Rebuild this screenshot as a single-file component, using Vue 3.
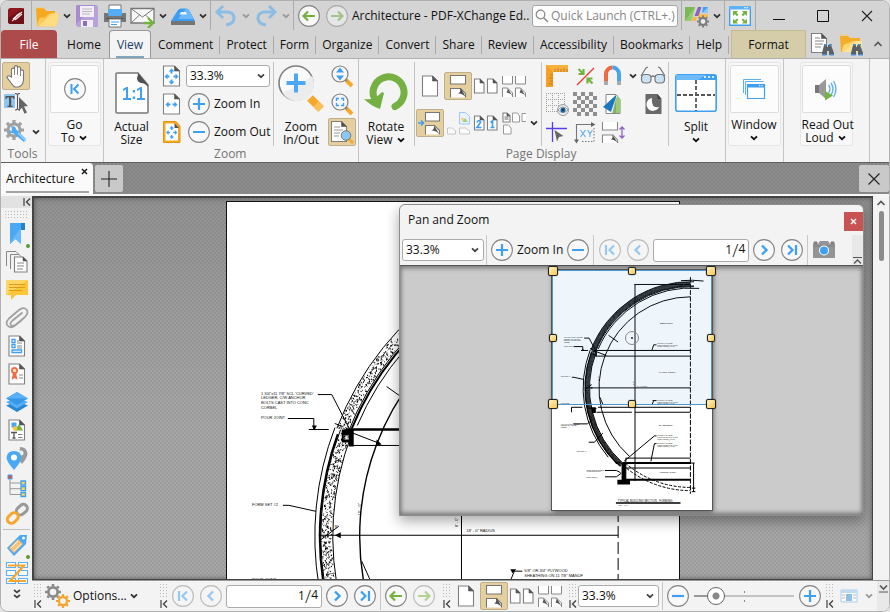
<script setup>
import { h, ref } from 'vue'

const B = '#3fa0f2'
const fold = (x, y, w, hh, f = 5) =>
  `<path d="M${x} ${y}h${w - f}l${f} ${f}v${hh - f}h${-w}z" fill="#fff" stroke="#808080" stroke-width="1.1"/><path d="M${x + w - f} ${y}v${f}h${f}z" fill="#555" stroke="#555" stroke-width=".6"/>`
const ring = (inner, fade) =>
  `<g opacity="${fade ? 0.5 : 1}"><circle cx="12" cy="12" r="10.4" fill="#f8f8f8" stroke="#858585" stroke-width="1.1"/>${inner}</g>`
const stroke = (d, c = B, w = 2.2) => `<path d="${d}" fill="none" stroke="${c}" stroke-width="${w}"/>`
const gear = (cx, cy, r, c) => {
  let s = `<circle cx="${cx}" cy="${cy}" r="${r * 0.58}" fill="none" stroke="${c}" stroke-width="${r * 0.34}"/>`
  for (let i = 0; i < 8; i++) {
    const a = (i * Math.PI) / 4
    s += `<path d="M${(cx + Math.cos(a) * r * 0.7).toFixed(1)} ${(cy + Math.sin(a) * r * 0.7).toFixed(1)}L${(cx + Math.cos(a) * r).toFixed(1)} ${(cy + Math.sin(a) * r).toFixed(1)}" stroke="${c}" stroke-width="${r * 0.32}"/>`
  }
  return s
}
const binoc = '<g transform="translate(12 11)"><path d="M2 2h3v2h1V2h3l3 8v2H7V8H5v4H0v-2z" fill="#5b6168"/><path d="M2 1h3v1.500H2zM7 1h3v1.500H7zM0 11h4.500v1.500H0zM7.500 11h4.500v1.500H7.500z" fill="#4a90d0"/></g>'
const checker = () => {
  let s = ''
  for (let y = 0; y < 6; y++) for (let x = 0; x < 6; x++) s += `<path d="M${x * 4} ${y * 4}h4v4h-4z" fill="${(x + y) % 2 ? '#f4f4f4' : '#8f8f8f'}"/>`
  return s
}
const fitArrows = `<g fill="${B}"><path d="M11.500 4.500l3 3h-2v2h-2v-2h-2zM11.500 20.500l3-3h-2v-2h-2v2h-2zM4.500 12.500l3-3v2h2v2h-2v2zM18.500 12.500l-3-3v2h-2v2h2v2z"/></g>`
const lens = (inner) =>
  `<path d="M16 16l6 6" stroke="#f6a72c" stroke-width="4"/><path d="M15 15l2 2" stroke="#888" stroke-width="2"/><circle cx="10" cy="10" r="8" fill="#f6f6f6" stroke="#808080" stroke-width="1.2"/>${inner}`

const icons = {
  logo: [16, 16, '<rect width="16" height="16" rx="2.500" fill="#8e1720"/><path d="M0 10L16 0v16H3q-3 0-3-3z" fill="#6d1017"/><path d="M4 13q3-2 4-4l6-5M5 11l7-6M7 12l7-6M8 8l4-3" stroke="#f4e8e8" stroke-width="1.100" fill="none"/>'],
  folder: [24, 24, '<path d="M1 4h8l2 3h9v5L3 22H2z" fill="#f5a91f"/><path d="M1 4h8" stroke="#fcc951" stroke-dasharray="2 1"/><path d="M2 22.500q1-8 4-9h4l4-4h9.500q0 9-3 13z" fill="#fbca57"/><path d="M4 22L17 9.500h6.500q0 8-3 13z" fill="#ffdc80"/>'],
  save: [24, 24, '<path d="M2 1h19l2 2v20H3l-2-2V2z" fill="#a78ccf"/><path d="M1 20L21 1l2 2v20H3z" fill="#b7a2da"/><path d="M5 2h14v11H5z" fill="#f3eff9"/><path d="M7 5h10M7 7.500h10M7 10h8" stroke="#aaa" stroke-width=".8"/><path d="M6 16h12v7H6z" fill="#f0ecf5"/><path d="M8 17h4v5H8z" fill="#8a70b5"/>'],
  print: [24, 24, '<path d="M6 1h12v7H6z" fill="#fff" stroke="#777"/><path d="M1 9h22v9H1z" fill="#767676"/><path d="M5 5h14v5l-1 2H6l-1-2z" fill="#55aef5"/><path d="M3 14.500h18" stroke="#555"/><path d="M6 15h12v8H6z" fill="#fff" stroke="#777"/><path d="M8 18h8M8 20.500h6" stroke="#3fa0f2"/>'],
  mail: [26, 24, '<path d="M1 4.500h23v14.500H1z" fill="#f8f8f8" stroke="#777" stroke-width="1.300"/><path d="M1 4.500l11.500 8.500L24 4.500M1 19l8.500-8M24 19l-8.500-8" fill="none" stroke="#777"/><path d="M14 19h8M18 14l5 5-5 5" fill="none" stroke="#74b33c" stroke-width="2.400"/>'],
  scan: [26, 24, '<path d="M1 17L8 6q1-1.500 3-1.500h5q2 0 3 1.500l6 11z" fill="#3d9df0"/><path d="M8 15l8-10.500q2 0 3 1.500l5 9z" fill="#6db9f7"/><path d="M11 8h5l1 2.500H9.500z" fill="#e8f4ff"/><path d="M1 17h24v4H1z" fill="#757575"/>'],
  undo: [24, 24, '<path d="M3 8h11q6 1 6 6 0 6-8 7" fill="none" stroke="#8abce5" stroke-width="3"/><path d="M9 2L3 8l6 6" fill="none" stroke="#8abce5" stroke-width="2.800"/>'],
  redo: [24, 24, '<path d="M21 8H10q-6 1-6 6 0 6 8 7" fill="none" stroke="#8abce5" stroke-width="3"/><path d="M15 2l6 6-6 6" fill="none" stroke="#8abce5" stroke-width="2.800"/>'],
  back: [24, 24, ring(stroke('M18 12H7M11 7.500L6.500 12l4.500 4.500', '#74b33c', 2.2))],
  fwd: [24, 24, ring(stroke('M6 12h11M13 7.500l4.500 4.500-4.500 4.500', '#74b33c', 2.2), true)],
  plus: [24, 24, ring(stroke('M12 6v12M6 12h12'))],
  minus: [24, 24, ring(stroke('M6 12h12'))],
  next: [24, 24, ring(stroke('M10 7.500l4.500 4.500-4.500 4.500', B, 2.4))],
  last: [24, 24, ring(stroke('M8 7.500l4.500 4.500L8 16.500M16 7v10', B, 2.2))],
  prev: [24, 24, ring(stroke('M14 7.500L9.500 12l4.500 4.500', B, 2.4), true)],
  first: [24, 24, ring(stroke('M16 7.500L11.500 12l4.500 4.500M8 7v10', B, 2.2), true)],
  goto: [24, 24, ring(stroke('M15.500 7.500L11 12l4.500 4.500M8.500 7v10', B, 2))],
  chev: [10, 8, '<path d="M2 2.300L5 5.200 8 2.300" fill="none" stroke="currentColor" stroke-width="1.800"/>'],
  collapse: [8, 8, '<path d="M1 0v8" stroke="#444" stroke-width="1.200"/><path d="M7 .5L3.500 4 7 7.500" fill="none" stroke="#444" stroke-width="1.400"/>'],
  search: [14, 14, '<circle cx="5.500" cy="5.500" r="4.300" fill="none" stroke="#888" stroke-width="1.200"/><path d="M8.500 8.500L13 13" stroke="#888" stroke-width="1.400"/>'],
  launcher: [24, 24, '<path d="M0 3h10L6 17H0z" fill="#7cb856"/><path d="M0 17L10 3 6 17z" fill="#94cc72"/><path d="M13 3h3.500l-3 9H9.500z" fill="#8b62c2"/><path d="M8 13h4l-1 4H7z" fill="#f7b640"/><path d="M18 3h5v6h-6z" fill="#3fa0f2"/><path d="M17 9l6-6v6z" fill="#8cc6fa"/><path d="M14 10h9v4H13z" fill="#f9c04f"/>' + gear(18, 17.5, 6, '#7c7c7c') + '<circle cx="18" cy="17.500" r="2" fill="#eee"/>'],
  full: [22, 20, '<path d="M.7.700h20.600v18.600H.7z" fill="#fff" stroke="#3fa0f2" stroke-width="1.400"/><path d="M0 0h22v3.500H0z" fill="#5eb2f7"/><path d="M15 1.700h1.500M17.500 1.700H19" stroke="#fff"/><g fill="#74b33c"><path d="M4 5h5L7.500 6.700l2 2-1.500 1.500-2-2L4 10zM18 5h-5l1.500 1.700-2 2 1.500 1.500 2-2 2 1.800zM4 17.500h5l-1.500-1.700 2-2L8 12.500l-2 2-2-1.800zM18 17.500h-5l1.500-1.700-2-2 1.500-1.300 2 2 2-1.800z"/></g>'],
  min: [12, 12, '<path d="M0 9.500h12" stroke="#111" stroke-width="1"/>'],
  max: [12, 12, '<path d="M.5.500h11v11H.5z" fill="none" stroke="#111"/>'],
  x: [12, 12, '<path d="M1 1l10 10M11 1L1 11" stroke="#222" stroke-width="1.100"/>'],
  x15: [14, 14, '<path d="M1.500 1.500l11 11M12.500 1.500l-11 11" stroke="#222" stroke-width="1.100"/>'],
  xs: [7, 7, '<path d="M1 1l5 5M6 1L1 6" stroke="currentColor" stroke-width="1.400"/>'],
  findDoc: [24, 24, fold(1.5, 1.5, 15, 19, 5) + '<path d="M5 6h5M5 9h9M5 12h8M5 15h6" stroke="#888"/>' + binoc],
  findFolder: [24, 24, '<path d="M1 4h8l2 2h10v4L4 20H2z" fill="#f4ad27"/><path d="M1 3h8" stroke="#ffc94a" stroke-dasharray="2 1"/><path d="M3 20q0-6 3-8l4-1 4-2h9q0 8-3 11z" fill="#ffd66e"/><path d="M4 20L17 9h6q0 8-3 11z" fill="#ffe39b"/>' + binoc],
  hand: [20, 24, '<path d="M5.500 13V5q1.500-1.800 3 0V2.500q1.500-1.800 3 0V3.500q1.500-1.500 3 .3v2.700q1.500-1.300 3 .3V16q-.5 5.500-5 7H9q-2-1-3.500-3.500L1 13.500q.5-2.300 2.500-1.500z" fill="#fff" stroke="#777" stroke-width="1.100"/><path d="M8.500 5v6M11.500 4v7M14.500 6v6" stroke="#888"/>'],
  select: [24, 22, '<path d="M0 1h11v14H0z" fill="#8fc7f2"/><path d="M1.500 3h9v3H9.500L9 4.500H7.200v8.300h1.500v1.200H3.500v-1.200H5V4.500H3L2.500 6h-1z" fill="#555"/><path d="M11 .5q2 0 2.500 1.200Q14 .5 16 .5M13.500 2v14M11 17q2 0 2.500-1.200Q14 17 16 17" fill="none" stroke="#555" stroke-width="1.100"/><path d="M15 4l9 9-4 .5 3 6-2.500 1.300-2.600-6L15 18z" fill="#666"/>'],
  wrench: [24, 24, gear(10, 10, 10, '#a0a0a0') + '<circle cx="10" cy="10" r="4.500" fill="#f4f4f4"/><path d="M8 9L7 6.500q4.500-1 5 2.800l10 9.700-2 3L9 13q-4 1-4-3.500l2.500 2z" fill="#4fa9f2"/><path d="M14 13l8 8" stroke="#a8d5fa" stroke-width="1.200"/>'],
  actual: [34, 42, '<path d="M2 1h21l10 12v27q0 1-1 1H2q-1 0-1-1V2q0-1 1-1z" fill="#fdfdfd" stroke="#777" stroke-width="1.500"/><path d="M23 1q0 3-1 5 0 4 4 5 4 0 7 4v-2z" fill="#505050"/><g fill="#3fa0f2"><path d="M8 17l3.500-2H13v12h-2V17.500L8 19zM8 26h8v2H8zM22 17l3.500-2H27v12h-2V17.500L22 19zM22 26h8v2h-8zM17.800 18h2.200v2.500h-2.200zM17.800 24.500h2.200V27h-2.200z"/></g>'],
  fitPage: [24, 24, fold(3.5, 2, 16, 20) + fitArrows],
  fitWidth: [24, 24, fold(3.5, 2, 16, 20) + `<path d="M5.500 12.500l3-3v2h2v2h-2v2zM17.500 12.500l-3-3v2h-2v2h2v2z" fill="${B}"/>`],
  fitVisible: [24, 24, '<path d="M3.500 1.500h12.500l4 4.500v16.500h-16.500z" fill="#f7a927" stroke="#e5940c"/><path d="M5.500 3.500h9l3.500 4v13h-12.500z" fill="#fff"/><path d="M14.500 3v5h4.500z" fill="#555"/>' + `<g transform="translate(2.500 2.500) scale(.8)">${fitArrows}</g>`],
  zoomBig: [46, 48, '<path d="M32 34l11 11" stroke="#f6a72c" stroke-width="8"/><path d="M38 40l5 5" stroke="#fbbf57" stroke-width="7.500"/><circle cx="18" cy="19" r="17" fill="#fafafa" stroke="#808080" stroke-width="1.600"/><path d="M4 28Q20 24 34 12A17 17 0 0 1 6 31z" fill="#ececec"/><path d="M18 9.500v19M8.500 19h19" stroke="#4ba8f4" stroke-width="4"/>'],
  zoomDyn: [24, 24, lens(`<path d="M10 3.500l4 5H6zM10 16.500l4-5H6z" fill="${B}"/>`)],
  zoomMarq: [24, 24, lens(stroke('M6.500 9V6.500H9M11 6.500h2.500V9M13.500 11v2.500H11M9 13.500H6.500V11', B, 1.4))],
  panZoom: [24, 24, fold(1.5, 1.5, 15, 20) + '<path d="M4 7h6M4 10h9M4 13h6M4 16h5" stroke="#999"/><path d="M19 19l4 4" stroke="#f6a72c" stroke-width="3"/><circle cx="16" cy="15.500" r="4.800" fill="#8cc6f4" stroke="#777"/>'],
  rotate: [46, 40, '<path d="M10.500 23A15.500 15.500 0 1 1 32 33.500" fill="none" stroke="#76b043" stroke-width="7" stroke-linecap="round"/><path d="M1 26q10 2 18-7l2 1-4 16Q8 33 1 26z" fill="#76b043"/>'],
  single: [24, 24, fold(4.5, 2, 15, 20)],
  cont: [24, 24, '<path d="M4.500 1.500h15v8.500h-15z" fill="#fff" stroke="#777" stroke-width="1.100"/><path d="M4.500 23.500V14.500h10l5 5v4" fill="#fff" stroke="#777" stroke-width="1.100"/><path d="M14 14.500h1l5 9q-3-4-8-4 3-1 2-5z" fill="#505050"/>'],
  two: [26, 24, fold(1.5, 5, 9.5, 14, 4) + fold(14.5, 5, 9.5, 14, 4)],
  quad: [26, 24, '<path d="M1.500 2v8h10V2M14.500 2v8h10V2" fill="#fff" stroke="#888"/><path d="M1.500 23v-9h5l5 5v4M14.500 23v-9h5l5 5v4" fill="#fff" stroke="#888"/><path d="M6.500 14l5 8q-2-3-6-3.500 1.500-2 1-4.500zM19.500 14l5 8q-2-3-6-3.500 1.500-2 1-4.500z" fill="#555"/>'],
  gaps: [26, 24, '<path d="M8.500 1.500h14v8.500h-14zM8.500 23.500V14.500h9l5 5v4" fill="#fff" stroke="#777" stroke-width="1.100"/><path d="M17 14.500l5.500 9q-3-4-8-4 3-1 2.500-5z" fill="#505050"/><path d="M1 12h5M4 9.500L6.500 12 4 14.500" fill="none" stroke="#3fa0f2" stroke-width="1.600"/>'],
  bg: [26, 24, '<g opacity=".6"><path d="M14.500 1.500h6l4 4v7.500h-10z" fill="#e3f2fd" stroke="#5fb0f0"/><path d="M17 11l3-4 3 4z" fill="#74b33c"/><circle cx="17.500" cy="8" r="1.500" fill="#f7b640"/><path d="M2.500 23v-6h5l3 3v3zM14.500 23v-6h6l4 3v3z" fill="#fff" stroke="#aaa"/></g>'],
  rtl: [26, 24, fold(1.5, 5, 9.5, 14, 4) + fold(14.5, 5, 9.5, 14, 4) + '<path d="M4 11.500q.5-2 2.500-1.700 2 .7 0 3L4 16.500h4.500M17.500 11.500l2-1.500v6.500M17.500 16.500h4" fill="none" stroke="#3fa0f2" stroke-width="1.700"/>'],
  many: [26, 24, fold(2, 2, 7, 9, 3) + '<path d="M3.500 6h4M3.500 8h4" stroke="#666"/><path d="M11.500 2h5l2 3v6h-7zM25 2.500h-4v8h4M2.500 14h5l2.500 3v6H2.500z" fill="#fff" stroke="#999"/>'],
  ruler: [24, 24, '<path d="M1 1h22v7H8v15H1z" fill="#f8b03c"/><path d="M1 1l7 7v15H1z" fill="#f59f25"/><path d="M10 8V5M13 8V4M16 8V5M19 8V4M22 8V5M8 11H5M8 14H4M8 17H5M8 20H4" stroke="#c07a1c"/>'],
  snap: [24, 24, '<path d="M4 21L21 4" stroke="#e33" stroke-width="1.200"/><path d="M5.500 5l4 4M10.500 5v5h-5M19.500 19.500l-4-4M14.500 19.500v-5h5" fill="none" stroke="#74b33c" stroke-width="2.200"/>'],
  magnet: [24, 24, '<path d="M5 20V10a6.500 6.500 0 0 1 6.500-6.500" fill="none" stroke="#ee6a45" stroke-width="4"/><path d="M11.500 3.500A6.500 6.500 0 0 1 18 10v10" fill="none" stroke="#4ba2ee" stroke-width="4"/><path d="M3 17h4v4H3zM16 17h4v4h-4z" fill="#aaa"/>'],
  glasses: [26, 24, '<path d="M1 12L6 4l2-1M25 12L20 4l-2-1M11 13q2-2 4 0" fill="none" stroke="#777" stroke-width="1.200"/><rect x="1.500" y="10.500" width="9.500" height="8.500" rx="3.500" fill="#c9e3f6" stroke="#777" stroke-width="1.200"/><rect x="15" y="10.500" width="9.500" height="8.500" rx="3.500" fill="#c9e3f6" stroke="#777" stroke-width="1.200"/>'],
  grid: [24, 24, '<path d="M1.500 1v19M7.500 1v19M13.500 1v19M19.500 1v12M1 1.500h20M1 7.500h20M1 13.500h20M1 19.500h12" stroke="#a0a0a0" stroke-dasharray="1 1"/><circle cx="18" cy="18" r="5.500" fill="#eee" stroke="#999"/><path d="M13 18q5-6 10 0-5 5-10 0z" fill="#fff" stroke="#888" stroke-width=".8"/><circle cx="18" cy="18" r="2.600" fill="#1b69a8"/><circle cx="18" cy="18" r="1" fill="#0a2c4a"/>'],
  checker: [24, 24, checker()],
  overlay: [24, 24, '<path d="M5 2.500h10l4 5v14H5z" fill="#fff" stroke="#888"/><path d="M16 3l3.500 5v13h-8z" fill="#9cc97a"/><path d="M2 15L15 3v2L10 20z" fill="#1b76c0"/><path d="M15 3v18h-4z" fill="#2c6a3c" opacity=".25"/>'],
  moon: [24, 24, '<path d="M4.500 2h12l4 5v15h-16z" fill="#696969"/><path d="M16.500 2l4 5h-4z" fill="#444"/><path d="M11 6a6.500 6.500 0 1 0 7 9q-8 2-7-9z" fill="#fff"/>'],
  cross: [24, 24, '<path d="M1 8.500h21M7.500 2v20" stroke="#5a3bea" stroke-width="1.300"/><path d="M9.500 10l9 6-4.500 1-2 4.500z" fill="#666"/>'],
  xy: [26, 24, '<path d="M4.500 4v17M4.500 4.500H20" stroke="#777" stroke-width="1.100"/><path d="M2 19.500h5l-2.500 4zM19 2l4.500 2.500L19 7z" fill="#666"/><path d="M22 8v13.500H9" fill="none" stroke="#777" stroke-dasharray="1.500 1.500"/><path d="M8.500 10l5 7M13.500 10l-5 7M15.500 10l2.500 3.500 2.500-3.500M18 13.500V17" fill="none" stroke="#62b1ee" stroke-width="1.200"/>'],
  pageGap: [26, 24, '<path d="M2.500 2v8h15V2M2.500 23v-8H13l4.500 5v3" fill="#fff" stroke="#888" stroke-width="1.100"/><path d="M12.500 15l5.500 8q-3-3.500-7-3.500 2-1.500 1.500-4.500z" fill="#505050"/><path d="M22 8v9M19.500 9.500L22 7l2.500 2.500M19.500 15.500L22 18l2.500-2.500" fill="none" stroke="#8b62c2" stroke-width="1.300"/>'],
  split: [42, 38, '<rect x=".8" y=".8" width="40.400" height="36.400" rx="2" fill="#fff" stroke="#3fa0f2" stroke-width="1.600"/><path d="M1 1h40v5H1z" fill="#3fa0f2"/><path d="M1 1h30l-8 5H1z" fill="#6ebbfa"/><path d="M29 3h2M33 3h2M37 3h2" stroke="#fff" stroke-width="1.500"/><path d="M21 6v31M2 21h38" stroke="#555" stroke-width="1.800" stroke-dasharray="4 2"/>'],
  windows: [24, 22, '<path d="M1.500 15V1.500H19M3.500 17V3.500h18" fill="none" stroke="#5eb0f3"/><path d="M5.500 6.500h17v14h-17z" fill="#fff" stroke="#3fa0f2" stroke-width="1.200"/><path d="M5 6h18v3.500H5z" fill="#3fa0f2"/><path d="M17 7.700h1.200M19.200 7.700h1.200" stroke="#fff"/>'],
  speak: [24, 24, '<path d="M1 8h4v8H1z" fill="#777"/><path d="M5 8l7-6v20l-7-6z" fill="#999"/><path d="M14.500 8q3 4 0 8M17 6q4 6 0 12M19.500 4q5 8 0 16" fill="none" stroke="#62b1f1" stroke-width="1.400"/><path d="M11 14l8 4.500-8 5z" fill="#74b33c"/>'],
  add: [16, 16, '<path d="M8 0v16M0 8h16" stroke="#222" stroke-width="1.100"/>'],
  bookmark: [24, 24, '<path d="M5 1h15v7h-4v14l-5.500-5L5 22z" fill="#4ba8f4"/><path d="M16 1h4v7h-4z" fill="#2581cc"/><path d="M5 20L16 6v16l-5.500-5L5 22z" fill="#69b9fa"/>'],
  pages: [24, 24, '<path d="M1.500 16V1.500H11l3 3M5.500 19V4.500H14l4 4" fill="none" stroke="#888"/>' + fold(9.5, 7, 12.5, 15, 4) + '<path d="M12 13h7M12 16h7M12 19h6" stroke="#888"/>'],
  comment: [24, 24, '<path d="M1 2h22v15H11l-5 5v-5H1z" fill="#fbc638"/><path d="M1 2h22L1 17z" fill="#ffd666"/><path d="M4 6.500h16M4 9.500h16M4 12.500h13" stroke="#e59a10"/>'],
  clip: [24, 24, '<path d="M17.500 6.500L7 15q-3 3-.5 4.500 2 1 4.500-1L20 11q4-4 1.500-7.500-3-3-7.500.5L4 12.500q-4 4-1.500 7 3 3.500 7.500 0l7-5.500" fill="none" stroke="#a0a0a0" stroke-width="1.700"/>'],
  fields: [24, 24, fold(4, 2, 15.5, 20) + `<path d="M7 5.500h3v3H7zM7 10.500h3v3H7zM7 16h9.500v2.500H7z" fill="#fff" stroke="${B}" stroke-width="1.300"/><path d="M12 7h2M12 12h5M12 9h5M12 14h5" stroke="#888"/>`],
  cert: [24, 24, fold(4, 2, 15.5, 20) + '<path d="M8 11l-1.500 7 3-2 3 2L11 11z" fill="#ef6b45"/><circle cx="9.500" cy="8.500" r="3.500" fill="#ef6b45"/><circle cx="9.500" cy="8.500" r="1.700" fill="#ffe0b0"/><path d="M14 13h4M14 16h4" stroke="#888"/>'],
  layers: [24, 24, '<path d="M1 15.500l11 6.500 11-6.500-11-4z" fill="#2b86d0"/><path d="M1 12l11 6.500L23 12l-11-4z" fill="#55aef5"/><path d="M1 8.500l11 6.500 11-6.500L12 2z" fill="#3797e8"/><path d="M1 8.500L12 2l11 6.500z" fill="#58b0f6"/>'],
  content: [24, 24, fold(4, 2, 15.5, 20) + '<path d="M6.500 4.500h5v5h-5z" fill="#4ba8f4"/><path d="M10 12.500l4-6.500 4 6.500z" fill="#74b33c"/><circle cx="10" cy="10.500" r="2.300" fill="#f7c440"/><path d="M6 14.500h6M9 14.500v5M7.500 20h3" stroke="#555" stroke-width="1.300"/><path d="M13 16.500h4.500M13 19.500h4.500" stroke="#888"/>'],
  pins: [24, 24, '<path d="M15 1q7 0 7.500 7Q22 12 17 18l-3-4z" fill="#999"/><circle cx="16" cy="7" r="2.500" fill="#eee"/><path d="M9 5q7 0 7.500 7Q16 16 9 24 2 16 1.500 12 2 5 9 5z" fill="#4ba8f4"/><circle cx="9" cy="11.500" r="3" fill="#fff"/>'],
  tree: [24, 24, '<path d="M5 6v14.500h11M5 9h11M5 14.700h11" fill="none" stroke="#999"/><path d="M3 1h4v4H3z" fill="#e5512e" stroke="#3fa0f2"/><path d="M16 7h4.500v4H16zM16 12.700h4.500v4H16zM16 18.500h4.500v4H16z" fill="#fbd25c" stroke="#3fa0f2" stroke-width="1.300"/>'],
  links: [24, 24, '<rect x="-5.500" y="-4" width="12" height="8" rx="4" transform="translate(16.500 8) rotate(-42)" fill="none" stroke="#999" stroke-width="3"/><rect x="-6" y="-4" width="12" height="8" rx="4" transform="translate(7.800 16) rotate(-42)" fill="none" stroke="#f6a72c" stroke-width="3"/>'],
  tag: [24, 24, '<path d="M2 15L15 2h7l-1 9L9 23z" fill="#4ba8f4"/><path d="M4 15l9-9 5 5-9 9z" fill="#f8c27a"/><path d="M6 15l7-7M9 18l7-7" stroke="#fff" stroke-width=".8"/><circle cx="18.500" cy="5" r="1.500" fill="#fff"/>'],
  articles: [24, 24, '<path d="M1.500 1.500h9v5h-9zM13.500 1.500h9v5h-9zM1.500 9.500h9v5h-9zM13.500 9.500h9v5h-9zM1.500 17.500h9v5h-9zM13.500 17.500h9v5h-9z" fill="#fff" stroke="#5eb0f3" stroke-width="1.100"/><path d="M3 4.500h16L5 20h16" fill="none" stroke="#f6a72c" stroke-width="2.200"/>'],
  dbl: [10, 12, '<path d="M2 2L5 4.500 8 2M2 7L5 9.500 8 7" fill="none" stroke="#444" stroke-width="1.700"/>'],
  gears: [26, 24, gear(8, 8, 8, '#8a8a8a') + gear(18, 17, 7, '#f5a52c')],
  camera: [24, 24, '<path d="M1 6h5l2-3h8l2 3h5v14H1z" fill="#949494"/><path d="M2 4h3v2H2zM19 4h3v2h-3zM1 8h22" fill="#808080" stroke="#808080"/><circle cx="12" cy="12.500" r="5" fill="#fff"/><circle cx="12" cy="12.500" r="4" fill="#3fa0f2"/>'],
  panel: [18, 14, '<g opacity=".6"><path d="M1 1h16v12H1z" fill="#fff" stroke="#7ab8ea"/><path d="M1 1h16v3H1z" fill="#9ccbf1"/><path d="M6 5h6v7H6z" fill="#4b9de0"/><path d="M2 6h3M2 9h3M13 6h3M13 9h3" stroke="#999"/></g>'],
  rollup: [9, 9, '<path d="M0 1.500h9" stroke="#555"/><path d="M1 7.500L4.500 4 8 7.500" fill="none" stroke="#555" stroke-width="1.300"/>'],
  rolldown: [9, 9, '<path d="M0 8h9" stroke="#555"/><path d="M1 1.500L4.500 5 8 1.500" fill="none" stroke="#555" stroke-width="1.600"/>'],
  up: [10, 8, '<path d="M1.500 6L5 2.500 8.500 6" fill="none" stroke="#555" stroke-width="1.600"/>']
}

const Ic = (p) => {
  const [w, hh, body] = icons[p.n]
  return h('svg', { viewBox: `0 0 ${w} ${hh}`, width: w, height: hh, 'aria-hidden': 'true', innerHTML: body })
}
Ic.props = ['n']

/* Section drawing, in page units (453 x 680) */
const C = { x: 392, y: 335 }
const pt = (r, deg) => {
  const a = (deg * Math.PI) / 180
  return `${(C.x + r * Math.cos(a)).toFixed(1)} ${(C.y + r * Math.sin(a)).toFixed(1)}`
}
const arc = (r, from, to) => `M${pt(r, from)}A${r} ${r} 0 0 ${to > from ? 1 : 0} ${pt(r, to)}`
let seed = 7
const rnd = () => ((seed = (seed * 16807) % 2147483647) / 2147483647)
const speckles = () => {
  let d = ''
  for (let i = 0; i < 1900; i++) {
    const deg = 132 + rnd() * 138
    const base = deg < 201 ? 286 : 290
    const r = base + 1 + rnd() * 10
    d += `M${pt(r, deg)}l${(rnd() * 1.8 - 0.9).toFixed(1)} ${(rnd() * 1.6 + 0.2).toFixed(1)}`
  }
  return d
}
const speckle = speckles()
const note = (x, y, lines, s = 4, anchor = 'start') =>
  lines.map((t, i) => `<text x="${x}" y="${y + i * 4.7}" font-size="${s}" text-anchor="${anchor}">${t}</text>`).join('')
const ply = ['5/8" OR 3/4" PLYWOOD', 'SHEATHING ON 11 7/8" MANUF', 'WOOD I-JOISTS @ 16" OC']
const drawing = (thin) => {
  const k = 'vector-effect="non-scaling-stroke"'
  const ln = (d, w = 1, extra = '') => `<path ${k} d="${d}" fill="none" stroke="#000" stroke-width="${w}" ${extra}/>`
  return (
    `<path d="${arc(292, 132, 200)}${arc(296, 201, 270)}" fill="none" stroke="#000" stroke-opacity="${thin ? 0.75 : 0}" stroke-width="12"/>` +
    `<path d="${speckle}" fill="none" stroke="#000"/>` +
    ln(arc(298, 132, 201) + arc(286, 132, 201) + arc(302, 201, 272) + arc(290, 201, 272), 1) +
    ln(arc(299, 134, 200), thin ? 1 : 2) + ln(arc(288, 202, 272), thin ? 1 : 2) +
    ln(arc(304, 140, 201) + arc(284, 203, 275) + arc(306, 265, 277), 1) +
    ln(arc(259, 132, 270), thin ? 1 : 1.4) +
    ln('M108 222l8 3M119 228H392M124 244H392M92 334H392M130 389H392M126 403H226M235 403H392M209 533H392M209 561H392', 1) +
    ln('M119 228H392', thin ? 1 : 2.4) + ln('M200 547H392M209 594H392', 2) +
    ln('M235 41V598M233 41H392M209 533v65M401 547v82M392 547h12M396 628h10M396 618h10', 1) +
    ln('M392 20V634', 1, thin ? 'stroke-dasharray="5 1.500"' : 'stroke-dasharray="12 4"') +
    ln(arc(281, 131, 90) + arc(290, 131, 90), 1, 'stroke-dasharray="3 1.500"') +
    '<path d="M115 228h12v17h-5v-4h-7v-3h7v-4h-5v5h-2zM197 547h12v47h12v14h-36v-14h12zM110 389h14v16h-9z" fill="#000"/>' +
    ln('M91 193h14l18 35M61 217h26v11M82 228h20M56 304h6l27 6M122 230l31 12M160 185l27 19M92 340l20-15M135 360l9 20M126 393l-24-2M86 389H55v14M60 436h40l14-12M104 488h16l24-26M178 546h16M150 568h32l12 6M150 586h32l14-10M288 370h8M283 382l5-12M288 212h8M283 227l5-15M296 470h-6l-86 72M296 492h-6l-10 50', 1) +
    '<path d="M85 224h5l-2.500 5zM284 368h6l-4 4zM150 238l5 5-6 1zM108 334l6-3v6z" fill="#000"/>' +
    `<g fill="#111" font-family="Liberation Sans, sans-serif">` +
    note(34, 193, ["1 3/4\"x11 7/8\" SCL 'CURVED'", 'LEDGER, C/W ANCHOR', 'BOLTS CAST INTO CONC', 'CORBEL']) +
    note(34, 217.5, ['POUR JOINT']) + note(25, 304.5, ['FORM SET #2']) + note(25, 380, ['POUR JOINT']) +
    note(25, 438, ["1 3/4\"x11 7/8\" SCL 'CURVED'", 'LEDGER, C/W ANCHOR', 'CORBEL']) + note(70, 516, ['FORM SET #3']) +
    note(298, 371, ply) + note(298, 210, ply) + note(298, 471, ply) + note(298, 493, ply) +
    note(97, 569, ['KEYED JOINT IN FOOTING', 'AS PER STRUCTURAL']) + note(97, 588, ['CONC FOOTING']) +
    note(240, 331, ["18' - 0\" RADIUS"]) + note(108, 327, ['8"']) +
    `<text transform="translate(134 314) rotate(-90)" font-size="4">10' - 0"</text><text transform="translate(232 326) rotate(-90)" font-size="4">8' - 0"</text>` +
    note(324, 152, ['BEDROOM'], 7, 'middle') + note(326, 293, ['LIVING ROOM'], 7, 'middle') +
    note(322, 443, ['BASEMENT'], 7, 'middle') + note(327, 576, ['FOUNDATION'], 7, 'middle') +
    note(186, 657, ['TYPICAL BUILDING SECTION - FORMING'], 8) + note(190, 668, ['3/8" = 1\'-0"'], 5) +
    '</g>' + ln('M181 660H364', 1.4)
  )
}
const Sheet = (p) => h('svg', { viewBox: '0 0 453 680', innerHTML: drawing(p.thin), role: 'img', 'aria-label': 'Building section' })
Sheet.props = ['thin']

const tabs = ['Comment', 'Protect', 'Form', 'Organize', 'Convert', 'Share', 'Review', 'Accessibility', 'Bookmarks', 'Help']
const side = ['bookmark', 'pages', 'comment', 'clip', 'fields', 'cert', 'layers', 'content', 'pins', 'tree', 'links']
const sideNames = ['Bookmarks', 'Thumbnails', 'Comments', 'Attachments', 'Fields', 'Signatures', 'Layers', 'Content', 'Destinations', 'Tree', 'Links']
const zoom = ref('33.3%')
const page = ref('1')
const level = ref(16)
</script>

<template>
  <div class="window">
    <header class="titlebar">
      <span class="cell logo"><Ic n="logo" /></span>
      <i class="sep" />
      <button class="cell" aria-label="Open"><Ic n="folder" /></button>
      <button class="drop" aria-label="Open options"><Ic n="chev" /></button>
      <button class="cell" aria-label="Save"><Ic n="save" /></button>
      <button class="cell" aria-label="Print"><Ic n="print" /></button>
      <button class="cell" aria-label="Send"><Ic n="mail" /></button>
      <button class="drop" aria-label="Send options"><Ic n="chev" /></button>
      <button class="cell" aria-label="Scan"><Ic n="scan" /></button>
      <button class="drop" aria-label="Scan options"><Ic n="chev" /></button>
      <i class="sep" />
      <button class="cell" aria-label="Undo"><Ic n="undo" /></button>
      <button class="drop dim" aria-label="Undo list"><Ic n="chev" /></button>
      <button class="cell" aria-label="Redo"><Ic n="redo" /></button>
      <button class="drop dim" aria-label="Redo list"><Ic n="chev" /></button>
      <i class="sep" />
      <button class="cell" aria-label="Back"><Ic n="back" /></button>
      <button class="cell" aria-label="Forward"><Ic n="fwd" /></button>
      <h1 class="title">Architecture - PDF-XChange Ed..</h1>
      <label class="search"><Ic n="search" /><input type="text" placeholder="Quick Launch (CTRL+.)" aria-label="Quick Launch" /></label>
      <i class="sep" />
      <button class="cell" aria-label="UI options"><Ic n="launcher" /></button>
      <button class="drop" aria-label="UI options list"><Ic n="chev" /></button>
      <i class="sep" />
      <button class="cell" aria-label="Full screen"><Ic n="full" /></button>
      <i class="sep" />
      <button class="sys" aria-label="Minimize"><Ic n="min" /></button>
      <button class="sys" aria-label="Maximize"><Ic n="max" /></button>
      <button class="sys" aria-label="Close"><Ic n="x" /></button>
    </header>

    <nav class="tabs">
      <button class="tab file">File</button>
      <button class="tab home">Home</button>
      <button class="tab view">View</button>
      <button v-for="t in tabs" :key="t" class="tab plain">{{ t }}</button>
      <button class="tab format">Format</button>
      <span class="tabtools">
        <button class="cell" aria-label="Find"><Ic n="findDoc" /></button>
        <button class="cell" aria-label="Search"><Ic n="findFolder" /></button>
        <button class="drop" aria-label="Collapse ribbon"><Ic n="up" /></button>
      </span>
    </nav>

    <section class="ribbon">
      <div class="group tools">
        <div class="gbody">
          <div class="grid tgrid">
            <button class="cell on" aria-label="Hand"><Ic n="hand" /></button><span />
            <button class="cell" aria-label="Select text"><Ic n="select" /></button><span />
            <button class="cell" aria-label="Edit tools"><Ic n="wrench" /></button>
            <button class="drop" aria-label="More tools"><Ic n="chev" /></button>
          </div>
        </div>
        <footer>Tools</footer>
      </div>
      <div class="group">
        <button class="card"><span class="face"><Ic n="goto" /></span>Go<br /><span>To <Ic n="chev" /></span></button>
      </div>
      <div class="group">
        <div class="gbody">
          <button class="big"><Ic n="actual" /><span>Actual<br />Size</span></button>
          <div class="zgrid">
            <button class="cell" aria-label="Fit page"><Ic n="fitPage" /></button>
            <label class="combo"><select v-model="zoom" aria-label="Zoom level"><option>33.3%</option></select><Ic n="chev" /></label>
            <button class="cell" aria-label="Fit width"><Ic n="fitWidth" /></button>
            <button class="wide"><Ic n="plus" />Zoom In</button>
            <button class="cell" aria-label="Fit visible"><Ic n="fitVisible" /></button>
            <button class="wide"><Ic n="minus" />Zoom Out</button>
          </div>
          <i class="vs" />
          <button class="big"><Ic n="zoomBig" class="lift" /><span>Zoom<br />In/Out</span></button>
          <div class="col">
            <button class="cell" aria-label="Dynamic zoom"><Ic n="zoomDyn" /></button>
            <button class="cell" aria-label="Marquee zoom"><Ic n="zoomMarq" /></button>
            <button class="cell on" aria-label="Pan and zoom"><Ic n="panZoom" /></button>
          </div>
        </div>
        <footer>Zoom</footer>
      </div>
      <div class="group">
        <div class="gbody">
          <button class="big"><Ic n="rotate" /><span>Rotate<br />View <Ic n="chev" /></span></button>
          <i class="vs" />
          <div class="grid pgrid">
            <button class="cell" aria-label="Single page"><Ic n="single" /></button>
            <button class="cell on" aria-label="Continuous"><Ic n="cont" /></button>
            <button class="cell" aria-label="Two pages"><Ic n="two" /></button>
            <button class="cell" aria-label="Two pages continuous"><Ic n="quad" /></button><span />
            <button class="cell on" aria-label="Show gaps"><Ic n="gaps" /></button>
            <button class="cell" aria-label="Cover page"><Ic n="bg" /></button>
            <button class="cell" aria-label="Right to left"><Ic n="rtl" /></button>
            <button class="cell" aria-label="Many pages"><Ic n="many" /></button>
            <button class="drop" aria-label="More layouts"><Ic n="chev" /></button>
          </div>
          <i class="vs" />
          <div class="grid dgrid">
            <button class="cell" aria-label="Rulers"><Ic n="ruler" /></button>
            <button class="cell" aria-label="Line weights"><Ic n="snap" /></button>
            <button class="cell" aria-label="Snap"><Ic n="magnet" /></button>
            <button class="drop" aria-label="Snap options"><Ic n="chev" /></button>
            <button class="cell" aria-label="Reading view"><Ic n="glasses" /></button>
            <button class="cell" aria-label="Grid"><Ic n="grid" /></button>
            <button class="cell" aria-label="Transparency grid"><Ic n="checker" /></button>
            <button class="cell" aria-label="Page color"><Ic n="overlay" /></button><span />
            <button class="cell" aria-label="Dark mode"><Ic n="moon" /></button>
            <button class="cell" aria-label="Guides"><Ic n="cross" /></button>
            <button class="cell" aria-label="Coordinates"><Ic n="xy" /></button>
            <button class="cell" aria-label="Page spacing"><Ic n="pageGap" /></button>
          </div>
          <i class="vs" />
          <button class="big"><Ic n="split" /><span>Split<br /><Ic n="chev" /></span></button>
        </div>
        <footer>Page Display</footer>
      </div>
      <div class="group">
        <button class="card"><span class="face"><Ic n="windows" /></span>Window<br /><span><Ic n="chev" /></span></button>
      </div>
      <div class="group read">
        <button class="card"><span class="face"><Ic n="speak" /></span>Read Out<br /><span>Loud <Ic n="chev" /></span></button>
      </div>
    </section>

    <div class="doctabs">
      <div class="doctab"><a href="#">Architecture</a><button aria-label="Close tab"><Ic n="xs" /></button></div>
      <button class="newtab" aria-label="New tab"><Ic n="add" /></button>
      <button class="closeall" aria-label="Close document"><Ic n="x15" /></button>
    </div>

    <div class="body">
      <aside class="side">
        <button class="pin" aria-label="Collapse panes"><Ic n="collapse" /></button>
        <i class="dots" />
        <button v-for="(s, i) in side" :key="s" class="sidebtn" :class="{ live: i === 0 }" :aria-label="sideNames[i]"><Ic :n="s" /></button>
        <hr />
        <button class="sidebtn live" aria-label="Tags"><Ic n="tag" /></button>
        <button class="sidebtn" aria-label="Articles"><Ic n="articles" /></button>
        <button class="sidebtn more" aria-label="More panes"><Ic n="dbl" /></button>
      </aside>
      <div class="work">
        <div class="viewrow">
          <main class="canvas">
            <div class="sheet"><Sheet :thin="false" /></div>
            <section class="popup" aria-label="Pan and Zoom">
              <header><h2>Pan and Zoom</h2><button class="pclose" aria-label="Close pan and zoom"><Ic n="xs" /></button></header>
              <div class="ptools">
                <label class="combo"><select v-model="zoom" aria-label="Zoom level"><option>33.3%</option></select><Ic n="chev" /></label>
                <i class="sep" />
                <button class="wide"><Ic n="plus" />Zoom In</button>
                <button class="cell" aria-label="Zoom out"><Ic n="minus" /></button>
                <i class="sep" />
                <button class="cell" aria-label="First page"><Ic n="first" /></button>
                <button class="cell" aria-label="Previous page"><Ic n="prev" /></button>
                <label class="pagebox"><input v-model="page" type="text" aria-label="Page" /><em>/</em><b>4</b></label>
                <button class="cell" aria-label="Next page"><Ic n="next" /></button>
                <button class="cell" aria-label="Last page"><Ic n="last" /></button>
                <i class="sep" />
                <button class="cell" aria-label="Snapshot"><Ic n="camera" /></button>
                <span class="pend"><Ic n="rollup" /></span>
              </div>
              <div class="pcanvas">
                <div class="thumb">
                  <Sheet :thin="true" />
                  <div class="frame">
                    <i class="knob tl" /><i class="knob tc small" /><i class="knob tr" />
                    <i class="knob ml small" /><i class="ringmark" /><i class="knob mr small" />
                    <i class="knob bl" /><i class="knob bc small" /><i class="knob br" />
                  </div>
                </div>
              </div>
            </section>
          </main>
          <div class="scroll"><Ic n="up" /><i class="bar" /></div>
        </div>
        <footer class="status">
          <span class="grip"><i /><Ic n="collapse" /></span>
          <button class="wide opts"><Ic n="gears" />Options...</button>
          <button class="drop" aria-label="Options list"><Ic n="chev" /></button>
          <span class="space" />
          <span class="grip"><i /><Ic n="collapse" /></span>
          <button class="cell" aria-label="First page"><Ic n="first" /></button>
          <button class="cell" aria-label="Previous page"><Ic n="prev" /></button>
          <label class="pagebox"><input v-model="page" type="text" aria-label="Page" /><em>/</em><b>4</b></label>
          <button class="cell" aria-label="Next page"><Ic n="next" /></button>
          <button class="cell" aria-label="Last page"><Ic n="last" /></button>
          <i class="sep" />
          <button class="cell" aria-label="Back"><Ic n="back" /></button>
          <button class="cell" aria-label="Forward"><Ic n="fwd" /></button>
          <span class="grip late"><i /><Ic n="collapse" /></span>
          <button class="cell" aria-label="Single page"><Ic n="single" /></button>
          <button class="cell on" aria-label="Continuous"><Ic n="cont" /></button>
          <button class="cell" aria-label="Two pages"><Ic n="two" /></button>
          <button class="cell" aria-label="Two pages continuous"><Ic n="quad" /></button>
          <span class="grip late"><i /><Ic n="collapse" /></span>
          <label class="combo"><select v-model="zoom" aria-label="Zoom level"><option>33.3%</option></select><Ic n="chev" /></label>
          <i class="sep" />
          <button class="cell" aria-label="Zoom out"><Ic n="minus" /></button>
          <input v-model="level" class="slider" type="range" min="0" max="100" aria-label="Zoom" />
          <button class="cell" aria-label="Zoom in"><Ic n="plus" /></button>
          <span class="grip"><i /><Ic n="collapse" /></span>
          <button class="cell" aria-label="Pane options"><Ic n="panel" /></button>
          <button class="drop dim" aria-label="Pane options list"><Ic n="chev" /></button>
          <span class="corner"><Ic n="rolldown" /></span>
        </footer>
      </div>
    </div>
  </div>
</template>

<style>
body { background: #e4e4e4; }
</style>

<style scoped>
.window { height: 100vh; display: flex; flex-direction: column; box-sizing: border-box; border: 1px solid #b0b0b0; border-radius: 8px; overflow: hidden; background: #f3f3f3; color: #111; font: 12px/14px "Open Sans", "Noto Sans", sans-serif; }
.window * { box-sizing: border-box; }
svg { display: block; flex: none; }
button { margin: 0; padding: 0; border: 0; background: none; color: inherit; font: inherit; white-space: nowrap; }
input, select { font: inherit; color: inherit; border: 0; background: none; outline: 0; padding: 0; margin: 0; min-width: 0; }
.cell { width: 28px; height: 28px; flex: none; display: flex; align-items: center; justify-content: center; border-radius: 2px; }
.cell.on { background: #e5cf9e; border: 1px solid #bfb08c; }
.drop { width: 12px; height: 28px; flex: none; display: flex; align-items: center; justify-content: center; color: #333; }
.dim { color: #999; }
.sep { width: 1px; flex: none; margin: 0 1px; align-self: stretch; background: #ababab; }

.titlebar { height: 29px; flex: none; display: flex; align-items: center; background: #d4d4d4; }
.logo { margin-left: 1px; }
.title { flex: 1; margin: 0 0 0 1px; font-size: 12px; font-weight: 400; white-space: nowrap; min-width: 0; }
.search { width: 146px; height: 22px; flex: none; display: flex; align-items: center; gap: 2px; padding: 0 2px; margin-right: 2px; background: #fdfdfd; border: 1px solid #a6a6a6; border-radius: 3px; }
.search input { flex: 1; width: 0; }
.search input::placeholder { color: #888; opacity: 1; }
.sys { width: 44px; height: 28px; flex: none; display: flex; align-items: center; justify-content: center; }

.tabs { height: 29px; flex: none; display: flex; align-items: stretch; background: #d4d4d4; border-bottom: 1px solid #b0b0b0; }
.tab { position: relative; height: 28px; padding-top: 1px; }
.file { width: 56px; background: #ad4b4b; color: #fff; border-radius: 4px 4px 0 0; margin-right: 2px; }
.home { width: 50px; }
.view { width: 42px; margin-right: 1px; background: #f4f4f4; color: #1f3f66; border-radius: 4px 4px 0 0; border: 1px solid #999; border-bottom: 0; }
.view::after { content: ""; position: absolute; left: 6px; right: 6px; bottom: 0; height: 2px; background: #83a5bc; }
.plain { padding: 1px 7px 0 6px; }
.plain::after { content: ""; position: absolute; right: 0; top: 6px; bottom: 4px; width: 1px; background: #aaa; }
.format { width: 75px; margin-left: auto; background: #d5cdaa; border: solid #c4bb91; border-width: 1px 1px 0; }
.tabtools { width: 83px; flex: none; display: flex; gap: 1px; padding-left: 2px; }
.tabtools .drop { margin: 0 auto; }

.ribbon { height: 104px; flex: none; display: flex; background: #f4f4f4; border-bottom: 1px solid #606060; }
.group { display: flex; flex-direction: column; border-right: 1px solid #c4c4c4; padding: 2px 2px 0 1px; }
.group footer { text-align: center; color: #757575; line-height: 16px; }
.gbody { display: flex; height: 86px; }
.grid { display: grid; align-content: start; padding-top: 1px; }
.tgrid { grid-template-columns: 28px 13px; }
.pgrid { grid-template-columns: repeat(4, 28px) 12px; align-content: center; row-gap: 9px; }
.dgrid { grid-template-columns: repeat(3, 28px) 12px 28px; }
.vs { width: 1px; margin: 1px 1px 0; background: #c4c4c4; }
.big { width: 53px; display: flex; flex-direction: column; align-items: center; justify-content: space-between; padding-top: 4px; line-height: 13px; }
.big span, .card > span:last-child { display: inline-block; }
.big svg { margin: auto 0; }
.big span svg, .card > span:last-child svg { display: inline-block; margin: 0; }
.big .lift { margin: -1px 0; }
.zgrid { display: grid; grid-template-columns: 28px auto; padding-top: 1px; align-content: start; }
.wide { display: flex; align-items: center; gap: 3px; height: 28px; padding: 0 1px; }
.col { padding-top: 1px; }
.combo { position: relative; width: 84px; height: 22px; align-self: center; flex: none; display: flex; align-items: center; background: #fff; border: 1px solid #ababab; border-radius: 3px; }
.combo select { appearance: none; width: 100%; padding-left: 3px; }
.combo svg { position: absolute; right: 3px; pointer-events: none; color: #444; }
.card { width: 53px; height: 84px; margin: 1px 0 0 1px; border: 1px solid #e5e5e5; border-radius: 3px; background: #f8f8f8; line-height: 13px; padding: 1px; }
.face { height: 48px; display: flex; align-items: center; justify-content: center; margin-bottom: 5px; background: #fcfcfc; border: 1px solid #dcdcdc; border-radius: 2px; }
.read { width: 86px; align-items: center; }

.doctabs { height: 33px; flex: none; display: flex; align-items: center; gap: 2px; background: repeating-conic-gradient(#848484 0 25%, #8c8c8c 0 50%) 0 0 / 4px 4px; border-bottom: 2px solid #f6f6f6; }
.doctab { position: relative; width: 92px; height: 31px; display: flex; padding: 7px 5px 0 5px; background: #fafafa; border-radius: 0 4px 0 0; }
.doctab::after { content: ""; position: absolute; left: 5px; right: 4px; bottom: 1px; height: 2px; background: #a4a4a4; }
.doctab a { color: inherit; text-decoration: none; line-height: 18px; flex: 1; }
.doctab button { align-self: flex-start; margin-top: -2px; }
.newtab, .closeall { width: 28px; height: 27px; display: flex; align-items: center; justify-content: center; background: #c9c9c9; border-radius: 2px; }
.closeall { width: 30px; margin-left: auto; }

.body { flex: 1; min-height: 0; display: flex; }
.side { width: 31px; flex: none; display: flex; flex-direction: column; background: #f2f2f2; }
.pin { height: 12px; flex: none; display: flex; align-items: center; justify-content: flex-end; padding-right: 1px; background: #e2e2e2; }
.dots, .grip i { background: radial-gradient(circle, #bbb 0 1px, transparent 1px) 0 0 / 3px 3px; }
.dots { height: 9px; flex: none; margin: 2px 3px 1px; }
.sidebtn { position: relative; height: 28px; flex: none; display: flex; align-items: center; justify-content: center; }
.live::after { content: ""; position: absolute; right: 2px; bottom: 0; width: 4px; height: 4px; border-radius: 50%; background: #5c9a32; }
.side hr { width: 27px; margin: 1px auto; border: 0; border-top: 1px solid #c0c0c0; }
.more { height: 14px; }
.work { flex: 1; min-width: 0; display: flex; flex-direction: column; }
.viewrow { flex: 1; min-height: 0; display: flex; }
.canvas { position: relative; flex: 1; overflow: hidden; background: linear-gradient(rgba(0, 0, 0, .12), rgba(0, 0, 0, 0) 60%), repeating-conic-gradient(#9c9c9c 0 25%, #a6a6a6 0 50%) 0 0 / 4px 4px; border: solid #444; border-width: 2px 1px 1px 2px; box-shadow: inset 0 0 5px #555; padding-top: 3px; }
.sheet { width: 454px; margin: 0 auto; background: #fff; border: 1px solid #111; }
.sheet svg { width: 100%; height: auto; }
.scroll { width: 16px; flex: none; display: flex; flex-direction: column; align-items: center; gap: 4px; padding-top: 3px; background: #f3f3f3; }
.bar { width: 5px; height: 50px; border-radius: 3px; background: #8c8c8c; }

.popup { position: absolute; right: 8px; top: 6px; width: 465px; height: 312px; display: flex; flex-direction: column; background: #f3f3f3; border: 1px solid #8c8c8c; border-radius: 6px 6px 0 0; box-shadow: 0 5px 14px rgba(0, 0, 0, .35); }
.popup header { height: 30px; flex: none; display: flex; align-items: center; justify-content: space-between; padding-left: 8px; }
.popup h2 { margin: 0; font-size: 12px; font-weight: 400; }
.pclose { width: 19px; height: 19px; margin-top: 2px; display: flex; align-items: center; justify-content: center; background: #c75353; color: #fff; }
.ptools { height: 30px; flex: none; display: flex; align-items: center; padding-left: 2px; }
.ptools .sep { margin: 0 2px 0 1px; background: #c8c8c8; }
.ptools .combo { width: 82px; margin-right: 1px; }
.pend { margin-left: auto; width: 11px; align-self: stretch; display: flex; align-items: flex-end; justify-content: center; background: #e8e8e8; }
.pagebox { width: 96px; height: 23px; margin: 0 1px; flex: none; display: flex; align-items: center; padding-right: 3px; background: #fff; border: 1px solid #ababab; border-radius: 3px; }
.pagebox input { flex: 1; width: 0; text-align: right; font-size: 12px; }
.pagebox em { font-style: normal; font-size: 18px; font-weight: 300; }
.pagebox b { font-weight: 400; margin-bottom: 3px; }
.pcanvas { flex: 1; border: solid #555; border-width: 1px 0 0; background: #cbcbcb; box-shadow: inset 0 2px 5px #777, inset 0 -2px 5px #777; padding-top: 4px; }
.thumb { position: relative; width: 160px; margin: 0 auto; background: #fff; outline: 1px solid #555; box-shadow: 1px 2px 5px #555; }
.thumb > svg { width: 160px; height: 240px; }
.frame { position: absolute; left: 0; right: 0; top: 0; height: 135px; background: rgba(90, 165, 220, .1); border: 1px solid #4c96d2; }
.knob { position: absolute; width: 10px; height: 10px; margin: -5px; border: 1px solid #222; border-radius: 2px; background: linear-gradient(135deg, #fff3c4, #f6c64e); box-shadow: 0 0 1px #000; }
.knob.small { width: 8px; height: 8px; margin: -4px; }
.tl, .ml, .bl { left: 0; }
.tc, .bc { left: 50%; }
.tr, .mr, .br { left: 100%; }
.tl, .tc, .tr { top: 0; }
.ml, .mr { top: 50%; }
.bl, .bc, .br { top: 100%; }
.ringmark { position: absolute; left: 50%; top: 50%; width: 14px; height: 14px; margin: -7px; border: 1px solid #888; border-radius: 50%; background: radial-gradient(circle, #555 0 1px, transparent 1px); }

.status { height: 31px; flex: none; display: flex; align-items: center; background: #f3f3f3; border-top: 1px solid #999; }
.status .sep { height: 28px; align-self: center; background: #c8c8c8; }
.grip { width: 11px; height: 28px; flex: none; display: flex; flex-direction: column; align-items: center; gap: 2px; }
.grip i { width: 9px; height: 15px; margin-top: 1px; }
.late { margin-left: 3px; }
.status .combo { width: 81px; margin-right: 2px; }
.opts { padding-left: 2px; gap: 2px; }
.space { flex: 1; }
.slider { appearance: none; width: 100px; height: 28px; margin: 0 2px; background: linear-gradient(#888, #888) 50% 9px / 1px 2px no-repeat, linear-gradient(#888, #888) 50% 18px / 1px 2px no-repeat, linear-gradient(90deg, #999 16%, #c2c2c2 16%) center / 100% 2px no-repeat; }
.slider::-webkit-slider-thumb { appearance: none; width: 18px; height: 18px; border: 1px solid #666; border-radius: 50%; background: radial-gradient(circle, #888 0 3px, #fff 4px); }
.corner { width: 12px; height: 30px; margin-left: 2px; flex: none; display: flex; justify-content: center; padding-top: 3px; background: #e9e9e9; }
</style>
